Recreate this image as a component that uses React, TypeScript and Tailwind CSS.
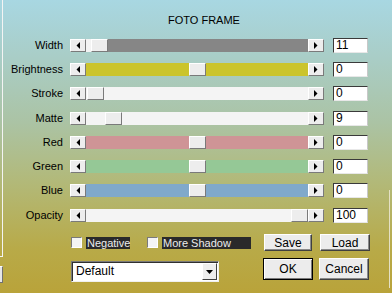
const font = { fontFamily: '"Liberation Sans", Arial, sans-serif' };

interface Row {
	label: string;
	value: string;
	pos: number;
	left: string;
	right: string;
	mt: string;
}

const rows: Row[] = [
	{ label: "Width", value: "11", pos: 5, left: "bg-[#f3f3f3]", right: "bg-[#868686]", mt: "mt-0" },
	{ label: "Brightness", value: "0", pos: 103, left: "bg-[#cbc42c]", right: "bg-[#cbc42c]", mt: "mt-[9px]" },
	{ label: "Stroke", value: "0", pos: 1, left: "bg-[#f4f4f4]", right: "bg-[#f4f4f4]", mt: "mt-[9px]" },
	{ label: "Matte", value: "9", pos: 19, left: "bg-[#f4f4f4]", right: "bg-[#f4f4f4]", mt: "mt-[10px]" },
	{ label: "Red", value: "0", pos: 103, left: "bg-[#cf9496]", right: "bg-[#cf9496]", mt: "mt-[9px]" },
	{ label: "Green", value: "0", pos: 103, left: "bg-[#95c896]", right: "bg-[#95c896]", mt: "mt-[9px]" },
	{ label: "Blue", value: "0", pos: 103, left: "bg-[#80a9cb]", right: "bg-[#80a9cb]", mt: "mt-[9px]" },
	{ label: "Opacity", value: "100", pos: 205, left: "bg-[#f4f4f4]", right: "bg-[#f4f4f4]", mt: "mt-[10px]" },
];

const bevel =
	"bg-[#ededed] border border-t-white border-l-white border-r-[#7a7a7a] border-b-[#7a7a7a]";

function ArrowButton({ dir }: { dir: "left" | "right" }) {
	return (
		<div className={`w-[16px] h-full flex items-center justify-center ${bevel}`}>
			<svg width="4" height="7" viewBox="0 0 4 7">
				{dir === "left" ? (
					<polygon points="4,0 4,7 0.5,3.5" fill="#000" />
				) : (
					<polygon points="0,0 0,7 3.5,3.5" fill="#000" />
				)}
			</svg>
		</div>
	);
}

function Slider({ row }: { row: Row }) {
	return (
		<div className="flex h-[13px] w-[254px]">
			<ArrowButton dir="left" />
			<div className="flex w-[222px] h-full">
				<div className={`h-full ${row.left}`} style={{ width: row.pos }} />
				<div className={`w-[17px] h-full ${bevel}`} />
				<div className={`flex-1 h-full ${row.right}`} />
			</div>
			<ArrowButton dir="right" />
		</div>
	);
}

function Check({ label, w }: { label: string; w: string }) {
	return (
		<div className="flex items-center">
			<div className="w-[11px] h-[11px] bg-[#f4f4f4] border border-t-[#7a7a7a] border-l-[#7a7a7a] border-r-white border-b-white" />
			<div
				className={`ml-[4px] h-[12px] leading-[12px] text-[11px] text-[#ececec] bg-[#2a2a2a] px-[1px] ${w}`}
			>
				{label}
			</div>
		</div>
	);
}

const btn =
	"h-full flex items-center justify-center text-[12px] text-black bg-[#ececec] border border-t-white border-l-white border-r-[#404040] border-b-[#404040] shadow-[inset_-1px_-1px_0_#8a8a8a]";

export default function App() {
	return (
		<div
			className="w-[392px] h-[293px] flex overflow-hidden bg-[linear-gradient(180deg,#a8d7e2_0%,#a9cdc6_20%,#abc3a4_42%,#b2b979_62%,#b8aa48_85%,#b9a33a_100%)]"
			style={font}
		>
			<div className="w-[4px] flex flex-col">
				<div className="h-[257px] w-[3px] border-r border-b border-r-[#f4f4f4] border-b-[#f4f4f4]" />
				<div className="mt-[9px] h-[17px] w-[3px] bg-[#e6e6e6] border-t border-r border-b border-t-white border-r-[#707070] border-b-[#707070]" />
			</div>
			<div className="flex-1 flex flex-col">
				<div className="pt-[14px] pl-[164px] h-[27px] text-[11px] leading-[13px] text-black">
					FOTO FRAME
				</div>
				<div className="mt-[11px] flex flex-col">
					{rows.map((row) => (
						<div key={row.label} className={`flex items-center h-[15px] ${row.mt}`}>
							<div className="w-[59px] text-right text-[11px] leading-[13px] text-black">
								{row.label}
							</div>
							<div className="ml-[7px]">
								<Slider row={row} />
							</div>
							<div className="ml-[9px] w-[35px] h-[15px] bg-white border border-t-[#3a3a3a] border-l-[#3a3a3a] border-r-[#c8c8c8] border-b-[#e8e8e8] pl-[2px] text-[12px] leading-[13px] text-black">
								{row.value}
							</div>
						</div>
					))}
				</div>
				<div className="mt-[11px] flex items-center h-[17px]">
					<div className="ml-[67px] flex items-center">
						<Check label="Negative" w="w-[44px]" />
						<div className="ml-[17px]">
							<Check label="More Shadow" w="w-[89px]" />
						</div>
					</div>
					<div className="ml-[13px] flex h-[17px]">
						<div className={`w-[48px] ${btn}`}>Save</div>
						<div className={`ml-[8px] w-[50px] ${btn}`}>Load</div>
					</div>
				</div>
				<div className="mt-[7px] flex h-[22px]">
					<div className="ml-[67px] mt-[3px] w-[148px] h-[21px] flex items-center bg-white border border-t-[#7a7a7a] border-l-[#7a7a7a] border-r-[#f0f0f0] border-b-[#f0f0f0] shadow-[inset_1px_1px_0_#303030]">
						<div className="flex-1 pl-[4px] text-[12px] leading-[13px] text-black">Default</div>
						<div className="w-[15px] h-[17px] mr-[1px] flex items-center justify-center bg-[#ededed] border border-t-white border-l-white border-r-[#404040] border-b-[#404040]">
							<svg width="7" height="4" viewBox="0 0 7 4">
								<polygon points="0,0 7,0 3.5,4" fill="#000" />
							</svg>
						</div>
					</div>
					<div className="ml-[44px] flex h-[22px]">
						<div className="w-[50px] h-full flex items-center justify-center text-[12px] text-black bg-[#ececec] border border-black shadow-[inset_1px_1px_0_#ffffff,inset_-1px_-1px_0_#7a7a7a]">
							OK
						</div>
						<div className={`ml-[6px] w-[50px] ${btn}`}>Cancel</div>
					</div>
				</div>
			</div>
			<div className="w-[4px] flex flex-col">
				<div className="mt-[190px] ml-[1px] h-[98px] w-[1px] bg-[#e4e0c4]" />
			</div>
		</div>
	);
}
